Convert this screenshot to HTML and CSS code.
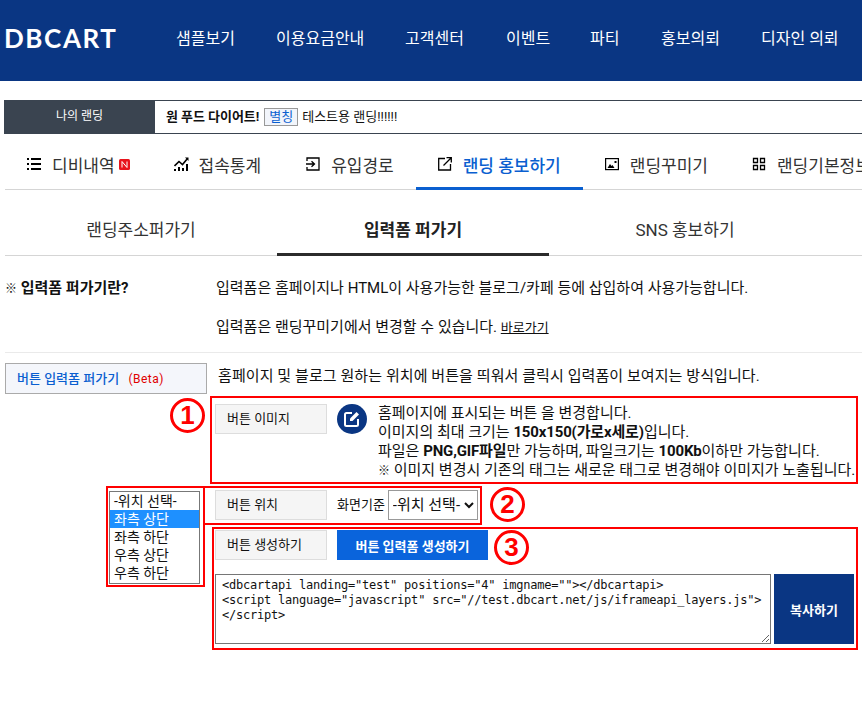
FILE: index.html
```html
<!DOCTYPE html>
<html lang="ko">
<head>
<meta charset="utf-8">
<title>DBCART</title>
<link rel="stylesheet" href="styles.css">
</head>
<body>
<header class="site-header">
  <div class="logo">DBCART</div>
  <nav class="main-nav">
    <a class="nav-a">샘플보기</a>
    <a class="nav-b">이용요금안내</a>
    <a class="nav-c">고객센터</a>
    <a class="nav-d">이벤트</a>
    <a class="nav-e">파티</a>
    <a class="nav-f">홍보의뢰</a>
    <a class="nav-g">디자인 의뢰</a>
  </nav>
</header>

<div class="landing-bar">
  <div class="landing-label">나의 랜딩</div>
  <div class="landing-info"><b>원 푸드 다이어트!</b><span class="alias">별칭</span><span>테스트용 랜딩!!!!!!</span></div>
</div>

<div class="tabs">
  <a class="tab">
    <svg class="ico" width="14" height="14" viewBox="0 0 14 14"><path d="M0 1h2v2H0zM4 1h10v2H4zM0 6h2v2H0zM4 6h10v2H4zM0 11h2v2H0zM4 11h10v2H4z" fill="#000"/></svg>
    <span>디비내역</span>
    <svg class="new" width="11" height="11" viewBox="0 0 11 11"><rect width="11" height="11" rx="1.5" fill="#e8141c"/><path d="M3 8.500V2.500L8 8.500V2.500" fill="none" stroke="#fff" stroke-width="1"/></svg>
  </a>
  <a class="tab">
    <svg class="ico" width="15" height="14" viewBox="0 0 15 14"><path d="M0 12h2v2H0zM4 10h2v4H4zM8 11h2v3H8zM12 7h2v7h-2z" fill="#000"/><path d="M0.500 9L5 4.500 8.500 7.500 13.500 1.500" fill="none" stroke="#000" stroke-width="1.600"/><path d="M11 0.500h3.500V4z" fill="#000"/></svg>
    <span>접속통계</span>
  </a>
  <a class="tab">
    <svg class="ico" width="14" height="14" viewBox="0 0 14 14"><path d="M1 4V1h12v12H1v-3" fill="none" stroke="#000" stroke-width="1.300"/><path d="M0 7h8M5.500 4.200L8.500 7 5.500 9.800" fill="none" stroke="#000" stroke-width="1.300"/></svg>
    <span>유입경로</span>
  </a>
  <a class="tab active">
    <svg class="ico" width="14" height="14" viewBox="0 0 14 14"><path d="M7 1.500H.7V13H12.500V7" fill="none" stroke="#000" stroke-width="1.300"/><path d="M5.500 8.500L13 1M8.500 .7H13.300V5.500" fill="none" stroke="#000" stroke-width="1.300"/></svg>
    <span>랜딩 홍보하기</span>
  </a>
  <a class="tab">
    <svg class="ico" width="14" height="14" viewBox="0 0 14 14"><rect x=".6" y="1.600" width="12.800" height="11" fill="none" stroke="#000" stroke-width="1.200"/><path d="M2.500 11l2.500-4 1.500 2 1-1 2 3z" fill="#000"/><rect x="9.500" y="4" width="2" height="2" fill="#000"/></svg>
    <span>랜딩꾸미기</span>
  </a>
  <a class="tab">
    <svg class="ico" width="14" height="14" viewBox="0 0 14 14"><path d="M1.500 1.500h4v4h-4zM8.500 1.500h4v4h-4zM1.500 8.500h4v4h-4zM8.500 8.500h4v4h-4z" fill="none" stroke="#000" stroke-width="1.300"/></svg>
    <span>랜딩기본정보</span>
  </a>
</div>

<div class="subtabs">
  <a class="subtab">랜딩주소퍼가기</a>
  <a class="subtab active">입력폼 퍼가기</a>
  <a class="subtab">SNS 홍보하기</a>
</div>

<section class="about">
  <h3 class="about-title"><span class="refmark">※</span> 입력폼 퍼가기란?</h3>
  <div class="about-text">
    <p>입력폼은 홈페이지나 HTML이 사용가능한 블로그/카페 등에 삽입하여 사용가능합니다.</p>
    <p>입력폼은 랜딩꾸미기에서 변경할 수 있습니다. <a class="link">바로가기</a></p>
  </div>
</section>

<main class="embed">
  <div class="embed-head">
    <div class="embed-tab">버튼 입력폼 퍼가기 <span class="beta">(Beta)</span></div>
    <p class="embed-desc">홈페이지 및 블로그 원하는 위치에 버튼을 띄워서 클릭시 입력폼이 보여지는 방식입니다.</p>
  </div>

  <div class="rows">
    <div class="row row-image">
      <div class="row-label">버튼 이미지</div>
      <svg class="edit-ico" width="30" height="30" viewBox="0 0 30 30"><circle cx="15" cy="15" r="15" fill="#0a3683"/><path d="M15 9H9.500A1.500 1.500 0 0 0 8 10.500V20.500A1.500 1.500 0 0 0 9.500 22H19.500A1.500 1.500 0 0 0 21 20.500V15" fill="none" stroke="#fff" stroke-width="2"/><path d="M13 14.500L19.500 8l2.500 2.500L15.500 17H13z" fill="#fff"/></svg>
      <div class="image-notes">
        <p>홈페이지에 표시되는 버튼 을 변경합니다.</p>
        <p>이미지의 최대 크기는 <b>150x150(가로x세로)</b>입니다.</p>
        <p>파일은 <b>PNG,GIF파일</b>만 가능하며, 파일크기는 <b>100Kb</b>이하만 가능합니다.</p>
        <p><span class="refmark">※</span> 이미지 변경시 기존의 태그는 새로운 태그로 변경해야 이미지가 노출됩니다.</p>
      </div>
    </div>

    <div class="row row-position">
      <div class="row-label">버튼 위치</div>
      <span class="basis">화면기준</span>
      <select class="pos-select">
        <option>-위치 선택-</option>
        <option>좌측 상단</option>
        <option>좌측 하단</option>
        <option>우측 상단</option>
        <option>우측 하단</option>
      </select>
    </div>

    <div class="row row-create">
      <div class="row-label">버튼 생성하기</div>
      <button class="create-btn">버튼 입력폼 생성하기</button>
    </div>

    <div class="row row-code">
      <textarea class="code" spellcheck="false">&lt;dbcartapi landing="test" positions="4" imgname=""&gt;&lt;/dbcartapi&gt;
&lt;script language="javascript" src="//test.dbcart.net/js/iframeapi_layers.js"&gt;&lt;/script&gt;</textarea>
      <button class="copy-btn">복사하기</button>
    </div>
  </div>

  <div class="mark mark-1"></div>
  <div class="mark mark-2a"></div>
  <div class="mark mark-2b"></div>
  <div class="mark mark-3"></div>
  <div class="num num-1">1</div>
  <div class="num num-2">2</div>
  <div class="num num-3">3</div>
  <ul class="pos-list">
    <li>-위치 선택-</li>
    <li class="on">좌측 상단</li>
    <li>좌측 하단</li>
    <li>우측 상단</li>
    <li>우측 하단</li>
  </ul>
</main>
</body>
</html>
```

FILE: styles.css
```css
* { box-sizing: border-box; }
html, body { margin: 0; padding: 0; }
body {
  width: 862px;
  height: 709px;
  overflow: hidden;
  background: #fff;
  color: #111;
  font-family: Roboto, "Noto Sans CJK KR", sans-serif;
  font-size: 15px;
}
p, h3, ul { margin: 0; padding: 0; }
a { color: inherit; }
.refmark { font-size: 12px; }

.site-header {
  height: 81px;
  background: #0a3683;
  color: #fff;
  display: flex;
  align-items: flex-start;
}
.logo {
  margin: 22px 0 0 4px;
  width: 172px;
  font-family: Lato, sans-serif;
  font-weight: 700;
  font-size: 26px;
  line-height: 32px;
  letter-spacing: 1.6px;
}
.main-nav { display: flex; margin-top: 27px; font-size: 16px; line-height: 24px; white-space: nowrap; }
.nav-a { width: 100px; }
.nav-b { width: 129px; }
.nav-c { width: 101px; }
.nav-d { width: 84px; }
.nav-e { width: 71px; }
.nav-f { width: 100px; }

.landing-bar {
  margin: 19px 0 0 4px;
  height: 34px;
  display: flex;
  border-top: 1px solid #3a4450;
  border-bottom: 1px solid #3a4450;
}
.landing-label {
  width: 151px;
  margin: -1px 0;
  background: #3a4450;
  color: #fff;
  font-size: 12px;
  line-height: 33px;
  text-align: center;
}
.landing-info {
  display: flex;
  align-items: center;
  padding: 0 0 3px 11px;
  font-size: 13px;
}
.landing-info b { font-weight: 700; letter-spacing: -.05px; }
.alias {
  margin: 3px 4px 0 5px;
  width: 34px;
  height: 18px;
  border: 1px solid #999;
  background: #f2f5fb;
  color: #0a5fd0;
  line-height: 16px;
  text-align: center;
}

.tabs {
  margin: 0 0 0 5px;
  height: 56px;
  display: flex;
  border-bottom: 1px solid #d5d5d5;
}
.tab {
  display: flex;
  align-items: center;
  padding: 4px 22px 0;
  height: 56px;
  font-size: 17px;
  color: #333;
  white-space: nowrap;
}
.tab .ico { margin-right: 11px; flex: none; }
.tab .new { margin-left: 4px; flex: none; }
.tab:nth-child(2) { padding-right: 23px; }
.tab:nth-child(2) .ico { margin-right: 10px; }
.tab.active {
  color: #0a5fd0;
  font-weight: 500;
  border-bottom: 3px solid #0a5fd0;
  padding-top: 7px;
}

.subtabs {
  margin-left: 5px;
  height: 66px;
  display: flex;
  border-bottom: 1px solid #d5d5d5;
}
.subtab {
  width: 272px;
  height: 66px;
  padding-top: 28px;
  font-size: 17px;
  line-height: 24px;
  text-align: center;
  color: #333;
}
.subtab.active {
  font-weight: 700;
  color: #222;
  border-bottom: 3px solid #2b2b2b;
}

.about {
  margin-left: 5px;
  height: 97px;
  display: flex;
  border-bottom: 1px solid #eaeaea;
  padding-top: 22px;
}
.about-title {
  width: 211px;
  font-size: 15px;
  line-height: 20px;
  font-weight: 700;
}
.about-text p { line-height: 20px; margin-bottom: 19px; }
.link { text-decoration: underline; font-size: 13px; }

.embed { position: relative; margin-left: 5px; }
.embed-head {
  display: flex;
  align-items: flex-start;
  padding-top: 10px;
}
.embed-tab {
  width: 202px;
  height: 31px;
  border: 1px solid #aaa;
  background: #f4f6fb;
  color: #0a5fd0;
  font-size: 13px;
  font-weight: 500;
  line-height: 29px;
  padding-left: 11px;
  white-space: nowrap;
}
.beta { color: #e00000; font-size: 12px; font-weight: 400; margin-left: 6px; letter-spacing: .5px; }
.embed-desc { margin-left: 11px; line-height: 26px; letter-spacing: .08px; }

.rows { padding: 10px 0 0 210px; }
.row { display: flex; align-items: flex-start; }
.row-label {
  width: 112px;
  height: 30px;
  background: #f5f5f5;
  border: 1px solid #ddd;
  font-size: 13px;
  line-height: 28px;
  padding-left: 11px;
  flex: none;
}
.row-image { height: 86px; }
.edit-ico { margin-left: 10px; flex: none; }
.image-notes { margin-left: 11px; white-space: nowrap; }
.image-notes p { line-height: 19px; }
.image-notes b { font-weight: 700; letter-spacing: -.15px; }

.row-position { height: 40px; align-items: flex-start; }
.basis { margin-left: 10px; line-height: 30px; font-size: 13px; }
.pos-select {
  margin-left: 3px;
  width: 90px;
  height: 30px;
  border: 1px solid #999;
  background: #fff;
  font-family: inherit;
  font-size: 15px;
  color: #111;
}

.row-create { height: 44px; }
.create-btn {
  margin-left: 10px;
  width: 151px;
  height: 30px;
  border: 0;
  background: #0a64dc;
  color: #fff;
  font-family: inherit;
  font-size: 13px;
  font-weight: 700;
}
.row-code { gap: 3px; }
.code {
  width: 556px;
  height: 70px;
  margin: 0;
  padding: 3px 6px;
  border: 1px solid #767676;
  font-family: "DejaVu Sans Mono", monospace;
  font-size: 12px;
  letter-spacing: -.22px;
  line-height: 15px;
  color: #111;
}
.copy-btn {
  width: 80px;
  height: 70px;
  border: 0;
  background: #0a3683;
  color: #fff;
  font-family: inherit;
  font-size: 13px;
  font-weight: 700;
}

.mark { position: absolute; border: 2px solid #f00; }
.mark-1 { left: 205px; top: 43px; width: 648px; height: 88px; }
.mark-2a { left: 101px; top: 133px; width: 99px; height: 101px; }
.mark-2b { left: 198px; top: 133px; width: 279px; height: 39px; border-left: 0; }
.mark-3 { left: 207px; top: 174px; width: 646px; height: 123px; }
.num {
  position: absolute;
  width: 35px;
  height: 35px;
  border: 3px solid #f00;
  border-radius: 50%;
  color: #f00;
  font-family: "Liberation Sans", sans-serif;
  font-weight: 700;
  font-size: 26px;
  line-height: 29px;
  text-align: center;
}
.num-1 { left: 165px; top: 45px; }
.num-2 { left: 485px; top: 134px; }
.num-3 { left: 489px; top: 177px; }

.pos-list {
  position: absolute;
  left: 104px;
  top: 138px;
  width: 91px;
  height: 93px;
  border: 1px solid #777;
  background: #fff;
  list-style: none;
  color: #111;
  font-size: 14px;
}
.pos-list li { height: 18px; line-height: 18px; padding-left: 4px; white-space: nowrap; }
.pos-list li.on { background: #1e90ff; color: #fff; }
```
